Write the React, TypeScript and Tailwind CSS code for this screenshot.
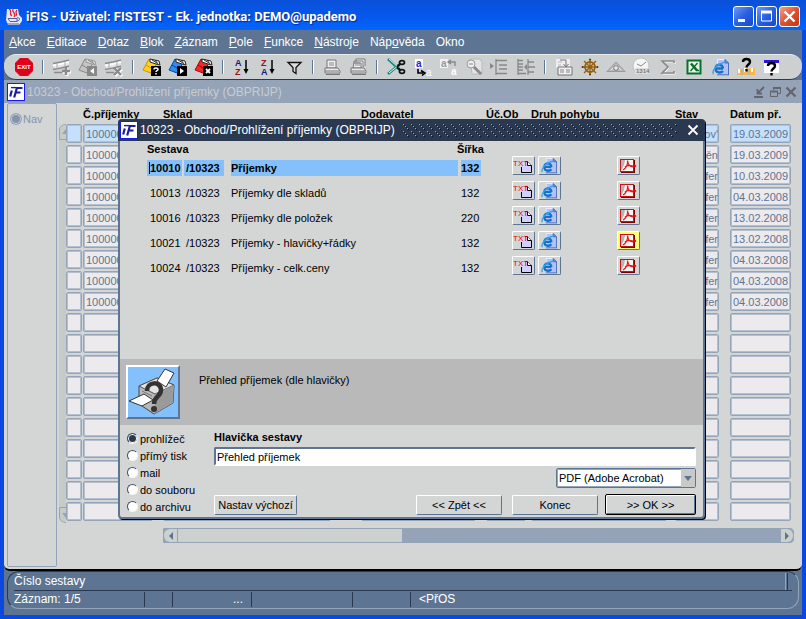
import React, { useState } from "react";
import type { ReactNode } from "react";

const MENU: [string, string, string][] = [
  ["", "A", "kce"],
  ["", "E", "ditace"],
  ["", "D", "otaz"],
  ["", "B", "lok"],
  ["", "Z", "áznam"],
  ["", "P", "ole"],
  ["", "F", "unkce"],
  ["", "N", "ástroje"],
  ["Náp", "o", "věda"],
  ["Okno", "", ""],
];

const RECEIPTS = [
  { no: "100000", state: "ov'", date: "19.03.2009" },
  { no: "100000", state: "ěn", date: "19.03.2009" },
  { no: "100000", state: "fer", date: "10.03.2009" },
  { no: "100000", state: "fer", date: "04.03.2008" },
  { no: "100000", state: "fer", date: "13.02.2008" },
  { no: "100000", state: "fer", date: "13.02.2008" },
  { no: "100000", state: "fer", date: "04.03.2008" },
  { no: "100000", state: "fer", date: "04.03.2008" },
  { no: "100000", state: "fer", date: "04.03.2008" },
  ...Array.from({ length: 10 }, () => ({ no: "", state: "", date: "" })),
];

const REPORTS = [
  { id: "10010", name: "Příjemky", width: "132" },
  { id: "10013", name: "Příjemky dle skladů", width: "132" },
  { id: "10016", name: "Příjemky dle položek", width: "220" },
  { id: "10021", name: "Příjemky - hlavičky+řádky", width: "132" },
  { id: "10024", name: "Příjemky - celk.ceny", width: "132" },
];

const OUTPUTS = ["prohlížeč", "přímý tisk", "mail", "do souboru", "do archivu"];

function Glyph({ children }: { children: ReactNode }) {
  return (
    <svg viewBox="0 0 20 20" className="h-5 w-5" fill="none" aria-hidden="true">
      {children}
    </svg>
  );
}

function RecordSheet({ mark }: { mark: string }) {
  return (
    <Glyph>
      <path d="M1 7l8-2 8-1v5l-8 2-7 1z" fill="#e6e6e6" />
      <path d="M1 6.500l8-1.500 8-2M1 12.500l8-1.500 8-2M2 15.500h8" stroke="#8c8c8c" strokeWidth="1.400" />
      <path d="M1 8.500l8-1.500 8-2" stroke="#fff" strokeWidth="1.400" />
      <path d="M5 6v6M13 5v4" stroke="#aaa" />
      <path d={mark} stroke="#fff" strokeWidth="3" transform="translate(1 1)" />
      <path d={mark} stroke="#8a8a8a" strokeWidth="2.400" />
    </Glyph>
  );
}

function Folder({ color, dark, mark, muted }: { color: string; dark: string; mark: string; muted?: boolean }) {
  return (
    <Glyph>
      <path d="M1 13L7 2l8 4-6 10z" fill={color} stroke={dark} />
      <path d="M8 2l9 2 1 4-4-1-6-2z" fill={muted ? "#ddd" : "#fff"} stroke={muted ? "#999" : "#222"} />
      <path d="M10 3l5 3M13 3l3 4" stroke={muted ? "#888" : "#333"} />
      <path d="M4 8l5 3" stroke={dark} />
      <rect x="9" y="9" width="10" height="10" fill={muted ? "#888" : "#000"} />
      {mark === "?" ? (
        <path d="M12 12.500c0-2 4-2 4 0 0 1.300-2 1-2 2.500M14 16v1.500" stroke="#fff" strokeWidth="1.500" />
      ) : mark === "x" ? (
        <path d="M12 12l4 4M16 12l-4 4" stroke="#fff" strokeWidth="1.800" />
      ) : (
        <path d={mark === "<" ? "M16 11v6l-4-3z" : "M12 11v6l4-3z"} fill="#fff" />
      )}
    </Glyph>
  );
}

function SortGlyph({ top, bottom, topColor, bottomColor }: { top: string; bottom: string; topColor: string; bottomColor: string }) {
  return (
    <Glyph>
      <text x="3" y="9" fontSize="9" fontWeight="700" fill={topColor}>{top}</text>
      <text x="3" y="18" fontSize="9" fontWeight="700" fill={bottomColor}>{bottom}</text>
      <path d="M14 3v12" stroke="#000" strokeWidth="1.500" />
      <path d="M11.500 12h5L14 17z" fill="#000" />
    </Glyph>
  );
}

function Printer({ stack }: { stack?: boolean }) {
  return (
    <Glyph>
      {stack && <path d="M8 5V2h9v7M6 7V4h9v6" fill="#eee" stroke="#777" />}
      <path d={stack ? "M5 11l1-5h7v5z" : "M5 11V3h9v8z"} fill="#eee" stroke="#777" />
      <path d="M7 6h5M7 8h5" stroke="#888" />
      <path d="M3 11h13l2 3v2H3z" fill="#e8e8e8" stroke="#777" />
      <path d="M3 14h14M4 17.500h14" stroke="#777" />
    </Glyph>
  );
}

function InternetGlyph({ compact }: { compact?: boolean }) {
  return (
    <svg viewBox="1 2 17 17" className={compact ? "h-4 w-4 shrink-0" : "h-[17px] w-[17px]"} fill="none" aria-hidden="true">
      <path d="M6 2.500h8l3.500 3V18H6z" fill="#b4c0fc" />
      <path d="M6 2.500h8M6.500 2.500V18" stroke="#e8ecff" />
      <path d="M14 2.500v3.500h3.500zM17.500 6v12M6 17.800h12" fill="#5a8fd8" stroke="#4a70b8" />
      <path d="M12 11.500H4.500c0-5 7.500-5 7.500 0M4.500 11.500c0 4.500 5.500 5 7.500 2.500" stroke="#1473c8" strokeWidth="2.400" />
      <path d="M2.500 17c-2-3 3-10 12-12" stroke="#38a0ec" strokeWidth="1.400" />
    </svg>
  );
}

function Question({ x = 0, y = 0 }: { x?: number; y?: number }) {
  return (
    <g transform={`translate(${x} ${y})`} stroke="#000" strokeWidth="2.400">
      <path d="M7 6c0-4 7-4 7 0 0 2.500-3.500 2.500-3.500 5.500M10.500 13v2.500" />
    </g>
  );
}

const EXIT = (
  <svg viewBox="0 0 20 20" className="h-5 w-5" aria-hidden="true">
    <path d="M6 1h8l5 5v8l-5 5H6l-5-5V6z" fill="#e0001c" />
    <text x="10" y="12" textAnchor="middle" fontSize="6" fontWeight="700" fill="#fff">EXIT</text>
  </svg>
);

const TOOLS: { label: string; icon: ReactNode }[][] = [
  [{ label: "Konec", icon: EXIT }],
  [
    { label: "Vložit záznam", icon: <RecordSheet mark="M14 10v8M10 14h8" /> },
    { label: "Kopírovat záznam", icon: <Folder color="#c4c4c4" dark="#888" mark="<" muted /> },
    { label: "Smazat záznam", icon: <RecordSheet mark="M10 11l7 7M17 11l-7 7" /> },
  ],
  [
    { label: "Zadat dotaz", icon: <Folder color="#ffd21c" dark="#d09000" mark="?" /> },
    { label: "Provést dotaz", icon: <Folder color="#2f8cf0" dark="#004a9c" mark=">" /> },
    { label: "Zrušit dotaz", icon: <Folder color="#f02a2a" dark="#b00000" mark="x" /> },
  ],
  [
    { label: "Řadit vzestupně", icon: <SortGlyph top="A" bottom="Z" topColor="#18187c" bottomColor="#a01018" /> },
    { label: "Řadit sestupně", icon: <SortGlyph top="Z" bottom="A" topColor="#a01018" bottomColor="#18187c" /> },
    { label: "Filtr", icon: <Glyph><path d="M4 5.500h13l-5 5v6l-3-2v-4z" fill="#ddd" stroke="#111" strokeWidth="1.300" /></Glyph> },
  ],
  [
    { label: "Tisk", icon: <Printer /> },
    { label: "Tisk více", icon: <Printer stack /> },
  ],
  [
    {
      label: "Vyjmout",
      icon: (
        <Glyph>
          <path d="M2 2l12 11M2 17L14 7" stroke="#16857f" strokeWidth="2.600" />
          <path d="M3 2l10 9M3 16L13 8" stroke="#d6ffff" />
          <path d="M11 10l3-3M11 10l3 3" stroke="#111" strokeWidth="2" />
          <ellipse cx="16" cy="5.500" rx="2.500" ry="1.800" stroke="#111" strokeWidth="1.700" />
          <ellipse cx="16" cy="14.500" rx="2.500" ry="1.800" stroke="#111" strokeWidth="1.700" />
        </Glyph>
      ),
    },
    {
      label: "Kopírovat",
      icon: (
        <Glyph>
          <rect x="3" y="2" width="8" height="9" fill="#fff" />
          <text x="4" y="10" fontSize="10" fontWeight="700" fill="#2424dc">a</text>
          <path d="M6 12v4h5M9 13.500l4 2.500-3 2.500" stroke="#000" strokeWidth="1.600" />
          <text x="14" y="19" fontSize="10" fill="#fff">a</text>
        </Glyph>
      ),
    },
    {
      label: "Vložit",
      icon: (
        <Glyph>
          <rect x="2" y="2" width="8" height="9" fill="#f2f2f2" />
          <text x="3" y="10" fontSize="10" fontWeight="700" fill="#999">a</text>
          <path d="M17 9V5h-6M13 3l-3 2 3 2" stroke="#888" strokeWidth="1.400" />
          <text x="13" y="18" fontSize="10" fontWeight="700" fill="#fff">a</text>
        </Glyph>
      ),
    },
    {
      label: "Hledat",
      icon: (
        <Glyph>
          <path d="M6 2h10l2 3v12H8z" fill="#e4e4e4" stroke="#bbb" />
          <circle cx="7" cy="7" r="4" fill="#eee" stroke="#999" />
          <path d="M5 7h4" stroke="#888" />
          <path d="M10 10l7 7" stroke="#888" strokeWidth="2.800" />
        </Glyph>
      ),
    },
    {
      label: "Odsadit",
      icon: <Glyph><path d="M0 6l4 3-4 3z" fill="#888" /><path d="M6 2v16M6 3.500h11M9 8h8M9 12h8M6 16.500h11" stroke="#888" strokeWidth="1.300" /></Glyph>,
    },
    {
      label: "Rozdělit",
      icon: <Glyph><path d="M2 2v16M2 3.500h5M2 7h5M2 10h5M2 13h5M2 16.500h8M12 2v16M12 5h6M12 10h7M12 15h6" stroke="#888" strokeWidth="1.300" /><path d="M8 10l3-3v6z" fill="#888" /></Glyph>,
    },
  ],
  [
    {
      label: "Formulář",
      icon: (
        <Glyph>
          <path d="M2 2h14v9H2z" fill="#eee" />
          <path d="M4 5h4M4 8h3" stroke="#bbb" />
          <path d="M4 10h14v8H4z" fill="#eee" stroke="#777" />
          <path d="M6 13h4M6 15h4M12 13h4M12 15h4" stroke="#888" />
          <path d="M6 3h6v6M9.500 7l2.500 3 2.500-3" stroke="#777" />
        </Glyph>
      ),
    },
    {
      label: "Kormidlo",
      icon: (
        <Glyph>
          <circle cx="10" cy="10" r="5" stroke="#94600c" strokeWidth="1.800" />
          <path d="M10 2v16M2 10h16M4 4l12 12M16 4L4 16" stroke="#94600c" strokeWidth="1.300" />
          <path d="M9 2.500h2M9 17.500h2M2.500 9v2M17.500 9v2" stroke="#5c3c08" strokeWidth="1.500" />
        </Glyph>
      ),
    },
    {
      label: "Pohled",
      icon: <Glyph><path d="M1 14.500L10 5l9 9.500z" fill="#bbb" stroke="#999" /><path d="M5 13l5-5 5 5" stroke="#eee" /><circle cx="10" cy="11" r="2.300" fill="#eee" stroke="#777" /></Glyph>,
    },
    {
      label: "Čas",
      icon: (
        <Glyph>
          <circle cx="9" cy="9" r="8" fill="#f5f5f5" stroke="#c0c0c0" />
          <path d="M9 9l5-4M9 9L5 7" stroke="#888" />
          <rect x="3" y="11" width="14" height="6" fill="#ddd" />
          <text x="4" y="16" fontSize="6" fontWeight="700" fill="#777">1314</text>
        </Glyph>
      ),
    },
    { label: "Součet", icon: <Glyph><path d="M16 6V4H4l6 6-6 6h12v-2" stroke="#fff" transform="translate(1 1)" /><path d="M16 6V4H4l6 6-6 6h12v-2" stroke="#8a8a8a" strokeWidth="1.600" /></Glyph> },
    {
      label: "Excel",
      icon: (
        <Glyph>
          <rect x="3.500" y="3.500" width="13" height="13" fill="#e8f2e8" stroke="#08702a" strokeWidth="2" />
          <path d="M7 6.500l6 7" stroke="#08702a" strokeWidth="2.600" />
          <path d="M13.500 6l-7 8M12 13.500h3" stroke="#08702a" strokeWidth="1.400" />
        </Glyph>
      ),
    },
    { label: "Internet", icon: <InternetGlyph /> },
    {
      label: "Podpora",
      icon: (
        <Glyph>
          <path d="M1 12h4v6H1zM7 11h5v7H7zM14 11h5v7h-5z" fill="#ffb648" />
          <path d="M3 12v4M9 11v4M16 11v4" stroke="#fff" strokeWidth="2" />
          <path d="M6 12v6M13 12v6" stroke="#b09870" />
          <Question y={-1} />
        </Glyph>
      ),
    },
    {
      label: "Nápověda",
      icon: (
        <Glyph>
          <path d="M2 3h15v13H2z" fill="#fff" />
          <path d="M2 4.500h15" stroke="#3010d8" strokeWidth="3" />
          <Question x={-1} y={3} />
        </Glyph>
      ),
    },
  ],
];

function IfLogo() {
  return (
    <svg viewBox="0 0 18 18" className="h-[18px] w-[18px] shrink-0" aria-hidden="true">
      <rect x="0.500" y="0.500" width="17" height="17" fill="#fff" stroke="#1818f0" />
      <path d="M4.800 7.500L3.200 13.500M9 5h6.500M10 4.500L7.200 14.500M9 9.500h4.500" stroke="#1c1c9c" strokeWidth="2.200" fill="none" />
      <path d="M4 4.600h5" stroke="#1c1c9c" strokeWidth="1.400" />
    </svg>
  );
}

function TextFileIcon() {
  return (
    <svg viewBox="0 0 20 16" className="h-4 w-5 shrink-0" fill="none" aria-hidden="true">
      <path d="M9 4h6l3 3v7H9z" fill="#d0d0ff" />
      <path d="M8.500 9v5.500h10v-7l-4-4H12" stroke="#000" />
      <path d="M14.500 3.500v4h4" fill="#fff" stroke="#000" />
      <text x="0" y="8" fontSize="8" fill="#f00000">TXT</text>
    </svg>
  );
}

function AcrobatIcon() {
  return (
    <svg viewBox="0 0 18 16" className="h-4 w-[18px] shrink-0" fill="none" aria-hidden="true">
      <path d="M15 2v12H2" stroke="#7c0000" strokeWidth="2" />
      <rect x="1.500" y="1.500" width="13" height="12" fill="#f4f4f4" stroke="#c01818" />
      <path d="M2 2h4l-1 5-3 6z" fill="#b4b4b4" />
      <path d="M4 12c3-2 5-6 4.500-9.500C9 6 11 9 14 9M6 9c2-2 5-2 8-1" stroke="#e81818" strokeWidth="1.200" />
      <path d="M14 5.500l2 1 1.500 1.500-1.500 1.500h-2z" fill="#d01010" />
    </svg>
  );
}

function PrinterPicture() {
  return (
    <svg viewBox="0 0 50 50" className="h-[50px] w-[50px]" fill="none" aria-hidden="true">
      <path d="M11 19l18-8 17 7-1 18-19 11-15-10z" fill="#b8b8b8" stroke="#444" />
      <path d="M11 19l16 8 19-9-17-7z" fill="#e4e4e4" stroke="#555" />
      <path d="M27 27l19-9-1 18-19 11z" fill="#9a9a9a" />
      <path d="M29 14l8-12 9 4-8 14z" fill="#fff" stroke="#333" />
      <path d="M1 34l15-7 9 6-11 6z" fill="#fff" stroke="#333" />
      <path d="M14 24l10 5" stroke="#777" />
      <path d="M19 24c0-10 14-10 14-1 0 7-7 6-7 14" stroke="#333" strokeWidth="4.500" />
      <circle cx="26" cy="42" r="3" fill="#333" />
    </svg>
  );
}

const RAISED =
  "flex h-[19px] w-[23px] items-center justify-center rounded-xs border border-t-white border-l-white border-r-[#5d7592] border-b-[#5d7592]";
const FIELD =
  "block h-[19px] rounded-xs border border-[#94a5b9] text-[11px] leading-3 text-[#5d7592] shadow-[inset_0_0_0_1px_#b4c0ce] outline-none";
const DIALOG_BUTTON =
  "h-5 rounded-xs border border-t-white border-l-white border-r-[#5d7592] border-b-[#5d7592] bg-[#d4d6d6] text-[11px]";

function Field({ label, value, active, className }: { label: string; value: string; active: boolean; className: string }) {
  return (
    <input
      readOnly
      aria-label={label}
      value={value}
      className={`${FIELD} ${active ? "bg-[#c4e0fc]" : "bg-[#eceaec]"} ${className}`}
    />
  );
}

function ReceiptTable() {
  return (
    <table className="w-full table-fixed border-collapse">
      <colgroup>
        <col className="w-[17px]" />
        <col className="w-20" />
        <col className="w-[198px]" />
        <col />
        <col className="w-[45px]" />
        <col className="w-36" />
        <col className="w-[55px]" />
        <col className="w-[61px]" />
      </colgroup>
      <thead>
        <tr className="h-[21px] text-left align-middle text-[11px] leading-3 whitespace-nowrap">
          <th className="p-0" />
          <th className="p-0">Č.příjemky</th>
          <th className="p-0">Sklad</th>
          <th className="p-0">Dodavatel</th>
          <th className="p-0">Úč.Ob</th>
          <th className="p-0">Druh pohybu</th>
          <th className="p-0">Stav</th>
          <th className="p-0">Datum př.</th>
        </tr>
      </thead>
      <tbody>
        {RECEIPTS.map((r, i) => (
          <tr key={i} className="h-[21px] align-top">
            <td className="p-0"><Field label="Výběr" value="" active={i === 0} className="w-4" /></td>
            <td className="p-0"><Field label="Č.příjemky" value={r.no} active={i === 0} className="w-[70px] px-0.5" /></td>
            <td className="p-0"><Field label="Sklad" value="" active={i === 0} className="w-[168px]" /></td>
            <td className="p-0"><Field label="Dodavatel" value="" active={i === 0} className="w-[115px]" /></td>
            <td className="p-0"><Field label="Úč.Ob" value="" active={i === 0} className="w-10" /></td>
            <td className="p-0"><Field label="Druh pohybu" value="" active={i === 0} className="w-[136px]" /></td>
            <td className="p-0"><Field label="Stav" value={r.state} active={i === 0} className="w-11 text-right" /></td>
            <td className="p-0"><Field label="Datum př." value={r.date} active={i === 0} className="w-full px-0.5" /></td>
          </tr>
        ))}
      </tbody>
    </table>
  );
}

function ReportDialog() {
  const [output, setOutput] = useState("prohlížeč");
  return (
    <section
      role="dialog"
      aria-labelledby="dialog-title"
      className="absolute top-4 left-[114px] flex w-[587px] flex-col rounded-sm border-2 border-t-0 border-[#5d7592] bg-[#d4d6d6] shadow-[1px_1px_0_0_#000]"
    >
      <header className="-mx-0.5 flex h-[22px] items-center rounded-t-sm bg-[#2b3950] pr-1 pl-0.5 text-white">
        <IfLogo />
        <h2 id="dialog-title" className="ml-0.5 text-xs whitespace-nowrap">10323 - Obchod/Prohlížení příjemky (OBPRIJP)</h2>
        <svg className="mx-2 h-3.5 min-w-0 flex-1" aria-hidden="true">
          <defs>
            <pattern id="grip" width="8" height="7" patternUnits="userSpaceOnUse">
              <path d="M0 1h1v1H0zM2 3h1v1H2zM4 5h1v1H4z" fill="#9cacbe" />
              <path d="M1 2h1v1H1zM3 4h1v1H3zM5 6h1v1H5z" fill="#0c1220" />
            </pattern>
          </defs>
          <rect width="100%" height="100%" fill="url(#grip)" />
        </svg>
        <button aria-label="Zavřít" className="flex h-4 w-4 items-center justify-center">
          <svg viewBox="0 0 12 12" className="h-3 w-3" aria-hidden="true"><path d="M1.500 1.500l9 9M10.500 1.500l-9 9" stroke="#fff" strokeWidth="1.800" /></svg>
        </button>
      </header>

      <div className="h-[218px] pr-[7px] pl-[27px]">
        <table className="w-full table-fixed border-collapse text-[11px] leading-3">
          <colgroup>
            <col className="w-[37px]" />
            <col className="w-[47px]" />
            <col />
            <col className="w-[51px]" />
            <col className="w-[26px]" />
            <col className="w-[79px]" />
            <col className="w-[79px]" />
          </colgroup>
          <thead>
            <tr className="h-3.5 text-left">
              <th colSpan={3} className="p-0 pt-0.5">Sestava</th>
              <th colSpan={4} className="p-0 pt-0.5">
                <span className="-ml-1">Šířka</span>
              </th>
            </tr>
          </thead>
          <tbody>
            {REPORTS.map((r, i) => {
              const mark = i === 0 ? "bg-[#84c0fc] font-bold" : "";
              return (
                <tr key={r.id} className="h-[25px] align-top whitespace-nowrap">
                  <td className="p-0 pt-[5px]">
                    <div className={`mr-0.5 flex h-4 items-center pl-0.5 ${mark}`}>
                      <span className={i === 0 ? "border-l border-black" : "border-l border-transparent"}>{r.id}</span>
                    </div>
                  </td>
                  <td className="p-0 pt-[5px]"><div className={`mr-[7px] flex h-4 items-center pl-0.5 ${mark}`}>/10323</div></td>
                  <td className="p-0 pt-[5px]"><div className={`mr-[3px] flex h-4 items-center ${mark}`}>{r.name}</div></td>
                  <td className="p-0 pt-[5px]"><div className={`flex h-4 w-5 items-center ${mark}`}>{r.width}</div></td>
                  <td className="p-0 pt-px">
                    <button aria-label={`${r.id} TXT`} className={RAISED}><TextFileIcon /></button>
                  </td>
                  <td className="p-0 pt-px">
                    <button aria-label={`${r.id} HTML`} className={RAISED}><InternetGlyph compact /></button>
                  </td>
                  <td className="p-0 pt-px">
                    <button aria-label={`${r.id} PDF`} className={`${RAISED} ${i === 3 ? "bg-[#ffff7c]" : ""}`}><AcrobatIcon /></button>
                  </td>
                </tr>
              );
            })}
          </tbody>
        </table>
      </div>

      <div className="flex h-[66px] gap-[19px] bg-[#b9b9ba] px-1.5 py-1.5">
        <button aria-label="Tisk sestavy" className="h-[54px] w-[54px] border-2 border-t-white border-l-white border-r-[#5d7592] border-b-[#5d7592] bg-[#84c0fc]">
          <PrinterPicture />
        </button>
        <p className="pt-[9px] text-[11px] leading-3">Přehled příjemek (dle hlavičky)</p>
      </div>

      <div className="flex h-[92px] gap-3 pr-[7px] pl-[7px] text-[11px] leading-3">
        <fieldset className="flex w-[75px] flex-col pt-[5px]">
          {OUTPUTS.map((o) => (
            <label key={o} className="flex h-[17px] items-center gap-0.5 whitespace-nowrap">
              <input
                type="radio"
                name="output"
                checked={output === o}
                onChange={() => setOutput(o)}
                className="h-[11px] w-[11px] appearance-none rounded-full border border-t-[#445064] border-r-[#f4f4f4] border-b-[#f4f4f4] border-l-[#445064] bg-white checked:bg-[#2b3950] checked:shadow-[inset_0_0_0_1px_#fff]"
              />
              {o}
            </label>
          ))}
        </fieldset>
        <div className="flex min-w-0 flex-1 flex-col">
          <label htmlFor="report-title" className="pt-1.5 pb-1 font-bold">Hlavička sestavy</label>
          <input
            id="report-title"
            defaultValue="Přehled příjemek"
            className="h-[19px] w-full rounded-xs border-2 border-t-[#5d7592] border-r-white border-b-white border-l-[#5d7592] bg-white px-px text-[11px] outline-none"
          />
          <div className="relative mt-0.5 w-[140px] self-end">
            <select
              aria-label="Formát"
              className="block h-5 w-full appearance-none rounded-xs border border-[#5d7592] bg-white pl-0.5 text-[11px] leading-3 shadow-[inset_0_0_0_1px_#94a5b9] outline-none"
            >
              <option>PDF (Adobe Acrobat)</option>
            </select>
            <span className="pointer-events-none absolute top-px right-px flex h-[18px] w-3.5 items-center justify-center bg-[#c8caca]">
              <svg viewBox="0 0 8 5" className="h-[5px] w-2" aria-hidden="true"><path d="M0 0h8L4 5z" fill="#5d7592" /></svg>
            </span>
          </div>
          <div className="mt-1.5 flex items-center">
            <button className={`w-[83px] whitespace-nowrap ${DIALOG_BUTTON}`}>Nastav výchozí</button>
            <span className="flex-1" />
            <button className={`mr-2.5 w-[86px] ${DIALOG_BUTTON}`}>&lt;&lt; Zpět &lt;&lt;</button>
            <button className={`mr-[7px] w-[86px] ${DIALOG_BUTTON}`}>Konec</button>
            <button className="h-[21px] w-[91px] rounded-xs border border-black bg-[#d4d6d6] text-[11px] shadow-[inset_1px_1px_0_#fff,inset_-1px_-1px_0_#5d7592]">&gt;&gt; OK &gt;&gt;</button>
          </div>
        </div>
      </div>
    </section>
  );
}

function CaptionButton({ label, red, children }: { label: string; red?: boolean; children: ReactNode }) {
  return (
    <button
      aria-label={label}
      className={`h-[21px] w-[21px] rounded-[3px] border border-white ${
        red ? "bg-linear-to-br from-[#f0a088] via-[#e05030] to-[#c03810]" : "bg-linear-to-br from-[#7098f4] via-[#2860e0] to-[#1848c8]"
      }`}
    >
      <svg viewBox="0 0 19 19" className="h-[19px] w-[19px]" fill="none" stroke="#fff" aria-hidden="true">{children}</svg>
    </button>
  );
}

export default function App() {
  return (
    <div className="flex min-h-screen flex-col bg-[#0a48e0] font-['Liberation_Sans',Arial,sans-serif] text-black">
      <header className="flex h-[30px] items-center bg-linear-to-b from-[#0a50d8] via-[#0458ec] to-[#0464fc] pt-[3px] pr-1.5 pl-[5px]">
        <svg viewBox="0 0 18 18" className="h-[18px] w-[18px]" fill="none" aria-hidden="true">
          <path d="M2 1h11l1 6 3 3v3l-3 4H3l-2-5z" fill="#e8e8f4" />
          <path d="M4 1c4 2-1 4 3 7M8 1c-2 3 4 4 1 8M12 2c-3 3 1 3-1 6" stroke="#e02030" strokeWidth="1.300" />
          <path d="M3 10.500h9v3H5zM12 10c4-1 3 3 0 3M2 16h12" stroke="#5060a8" />
        </svg>
        <h1 className="ml-[3px] flex-1 font-['Roboto',sans-serif] text-[13px] font-bold whitespace-nowrap text-white [text-shadow:1px_1px_1px_#062a8c]">
          iFIS - Uživatel: FISTEST - Ek. jednotka: DEMO@upademo
        </h1>
        <div className="flex gap-0.5">
          <CaptionButton label="Minimalizovat"><path d="M4 13.500h7" strokeWidth="3" /></CaptionButton>
          <CaptionButton label="Maximalizovat"><path d="M4.500 5v9h10V5z" /><path d="M4 5h11" strokeWidth="3" /></CaptionButton>
          <CaptionButton label="Zavřít" red><path d="M4.500 4.500l10 10M14.500 4.500l-10 10" strokeWidth="2.400" /></CaptionButton>
        </div>
      </header>

      <div className="mx-1 mb-1 flex flex-1 flex-col bg-[#5d7592]">
        <nav className="flex h-6 items-center gap-[11px] pl-[5px] text-xs text-white">
          {MENU.map(([pre, key, rest]) => (
            <button key={pre + key + rest}>
              {pre}
              <span className="underline">{key}</span>
              {rest}
            </button>
          ))}
        </nav>

        <div role="toolbar" className="flex h-[26px] items-center rounded-l-xl rounded-r-xl border-t border-b border-t-[#e8ecec] border-b-[#2b3950] bg-[#ccd0d0] pl-[7px]">
          {TOOLS.map((group, g) => (
            <div key={g} className="flex items-center">
              {g > 0 && (
                <span className="flex w-3 justify-center"><span className="h-3.5 w-0.5 border-r border-l border-r-white border-l-[#5d7592]" /></span>
              )}
              {group.map((t) => (
                <button key={t.label} aria-label={t.label} className="flex h-5 w-[26px] items-center justify-center">{t.icon}</button>
              ))}
            </div>
          ))}
        </div>

        <main className="flex flex-1 flex-col rounded-b-md border-b-2 border-black bg-[#d4d6d6]">
          <div className="flex h-[23px] items-center bg-[#94a3b7] pr-[5px] pl-[3px] text-[#c8ccd0]">
            <IfLogo />
            <h2 className="ml-0.5 flex-1 text-xs">10323 - Obchod/Prohlížení příjemky (OBPRIJP)</h2>
            <div className="flex gap-1">
              <button aria-label="Minimalizovat formulář">
                <svg viewBox="0 0 12 12" className="h-3 w-3" fill="none" stroke="#62666c" strokeWidth="1.800" aria-hidden="true"><path d="M11 1L5 7M4.500 3v4.500H9M1 11h9" /></svg>
              </button>
              <button aria-label="Obnovit formulář">
                <svg viewBox="0 0 12 12" className="h-3 w-3" fill="none" stroke="#62666c" aria-hidden="true"><path d="M4.500 4V2.500h7v5H9" /><path d="M4 2h8" strokeWidth="2" /><path d="M1.500 5.500h7v5h-7z" /><path d="M1 5.500h8" strokeWidth="2" /></svg>
              </button>
              <button aria-label="Zavřít formulář">
                <svg viewBox="0 0 12 12" className="h-3 w-3" fill="none" stroke="#62666c" strokeWidth="2.200" aria-hidden="true"><path d="M1.500 1.500l9 9M10.500 1.500l-9 9" /></svg>
              </button>
            </div>
          </div>

          <div className="relative flex flex-1 pr-2 pb-0.5 pl-[3px]">
            <aside className="w-[50px] shrink-0 rounded-xs border border-[#94a5b9] pt-[9px] pl-[3px]">
              <label className="flex items-center gap-0.5 text-[11px] leading-3 text-[#8494aa]">
                <input
                  type="radio"
                  name="nav"
                  disabled
                  className="h-2.5 w-2.5 appearance-none rounded-full border border-[#c0c8d4] bg-[#8494aa] shadow-[0_0_0_1px_#94a5b9]"
                />
                Nav
              </label>
            </aside>
            <div className="flex w-[9px] shrink-0 flex-col pt-[21px] pb-11 pl-0.5">
              <svg viewBox="0 0 7 16" className="h-4 w-[7px] shrink-0" aria-hidden="true"><path d="M7 .5C3 .5.500 3 .5 6v9.500H7" fill="#c8ccc8" stroke="#94a5b9" /><path d="M7 5L3 10h4z" fill="#94a5b9" /></svg>
              <div className="flex-1 bg-[#c6cac8]" />
              <svg viewBox="0 0 7 16" className="h-4 w-[7px] shrink-0" aria-hidden="true"><path d="M7 15.500c-4 0-6.500-2.500-6.500-5.500V.5H7" fill="#c8ccc8" stroke="#94a5b9" /><path d="M7 11L3 6h4z" fill="#94a5b9" /></svg>
            </div>
            <div className="min-w-0 flex-1 pr-[3px]">
              <ReceiptTable />
              <div className="mt-[5px] -mr-[3px] ml-[97px] flex h-[15px] items-center rounded-r-sm border border-[#94a5b9] bg-[#94a3b7]">
                <button aria-label="Posun vlevo" className="flex h-[13px] w-3.5 items-center justify-center rounded-l-md border-r border-[#94a5b9] bg-[#ccd0ce]">
                  <svg viewBox="0 0 4 8" className="h-2 w-1" aria-hidden="true"><path d="M4 0v8L0 4z" fill="#5d7592" /></svg>
                </button>
                <div className="h-full w-[224px] bg-[#ccd0ce]" />
                <span className="flex-1" />
                <button aria-label="Posun vpravo" className="flex h-[13px] w-3 items-center justify-center rounded-r-md bg-[#ccd0ce]">
                  <svg viewBox="0 0 4 8" className="h-2 w-1" aria-hidden="true"><path d="M0 0v8l4-4z" fill="#5d7592" /></svg>
                </button>
              </div>
            </div>
            <ReportDialog />
          </div>
        </main>

        <footer className="px-[3px] pb-1.5 text-xs text-white">
          <div className="rounded-xl border border-t-[#2b3950] border-r-[#94a5b9] border-b-[#94a5b9] border-l-[#2b3950] px-1.5">
            <div className="flex h-[19px] items-center justify-between border-b border-[#2b3950]">
              <span>Číslo sestavy</span>
              <span className="mr-1 h-[17px] w-[3px] border-r border-l border-r-[#2b3950] border-l-[#94a5b9]" />
            </div>
            <div className="flex h-[17px] items-stretch leading-[17px]">
              <span className="w-[130px]">Záznam: 1/5</span>
              <span className="my-px w-7 border-l border-[#2b3950]" />
              <span className="my-px w-[79px] border-l border-[#2b3950] pr-2 text-right leading-[15px]">...</span>
              <span className="my-px w-[101px] border-l border-[#2b3950]" />
              <span className="my-px w-[58px] border-l border-[#2b3950]" />
              <span className="my-px flex-1 border-l border-[#2b3950] pl-2 leading-[15px]">&lt;PřOS</span>
            </div>
          </div>
        </footer>
      </div>
    </div>
  );
}
